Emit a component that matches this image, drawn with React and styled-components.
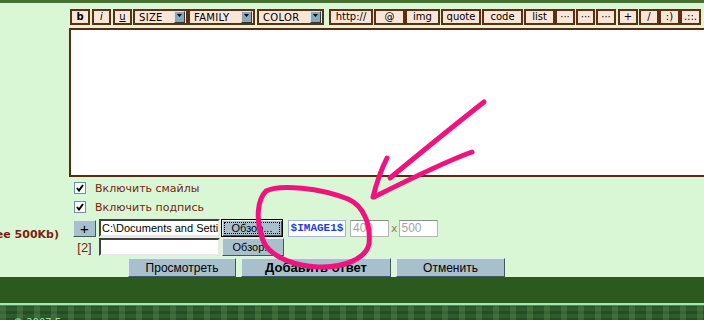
import React from "react";
import styled, { createGlobalStyle } from "styled-components";

const GlobalStyle = createGlobalStyle`
  html, body { margin: 0; padding: 0; }
  body {
    background: #d9f7d5;
    overflow: hidden;
    font-family: "DejaVu Sans", Verdana, sans-serif;
  }
`;

const Page = styled.div`
  position: relative;
  width: 704px;
  height: 320px;
  overflow: hidden;
  display: flex;
  flex-direction: column;
  background: #d9f7d5;
`;

const TopBand = styled.div`
  flex: none;
  height: 3px;
  background: #45702f;
`;

const FormGrid = styled.div`
  display: grid;
  grid-template-columns: 69px 1fr;
`;

const LeftCell = styled.div`
  display: flex;
  align-items: center;
  justify-content: flex-end;
  overflow: hidden;
  padding-right: 10px;
  white-space: nowrap;
  font: bold 11px "DejaVu Sans", Verdana, sans-serif;
  color: #7b1e12;
`;

const RightCell = styled.div`
  display: flex;
  flex-direction: column;
  min-width: 0;
`;

const Toolbar = styled.div`
  display: flex;
  height: 16px;
  margin: 6px 0 0 1px;
`;

const ToolBtn = styled.span`
  flex: none;
  box-sizing: border-box;
  width: ${(p) => p.$w}px;
  margin-left: ${(p) => p.$ml}px;
  height: 16px;
  border: 2px solid #5e2e12;
  background: #fae6d8;
  display: flex;
  align-items: center;
  justify-content: center;
  font-size: 10px;
  line-height: 1;
  color: #000;
  font-weight: ${(p) => (p.$b ? "bold" : "normal")};
  font-style: ${(p) => (p.$i ? "italic" : "normal")};
  text-decoration: ${(p) => (p.$u ? "underline" : "none")};
`;

const Select = styled.span`
  flex: none;
  box-sizing: border-box;
  width: ${(p) => p.$w}px;
  margin-left: ${(p) => p.$ml}px;
  height: 16px;
  border: 2px solid #5e2e12;
  background: #fae6d8;
  display: flex;
  align-items: stretch;
  padding: 0 1px 0 0;
`;

const SelectLabel = styled.span`
  flex: 1;
  display: flex;
  align-items: center;
  padding-left: 4px;
  font-size: 10px;
  letter-spacing: 0.3px;
  color: #000;
`;

const SelectArrow = styled.span`
  flex: none;
  width: 11px;
  box-sizing: border-box;
  background: #8ba7b7;
  border: 1px solid;
  border-color: #d8e6ee #2c3c46 #2c3c46 #d8e6ee;
  display: flex;
  justify-content: center;
  padding-top: 2px;
`;

const Editor = styled.div`
  box-sizing: border-box;
  width: 660px;
  height: 149px;
  margin-top: 3px;
  border: 2px solid #5a2a12;
  border-right: none;
  background: #fff;
`;

const Checks = styled.div`
  display: flex;
  flex-direction: column;
  gap: 7px;
  margin: 5px 0 0 5px;
`;

const CheckRow = styled.label`
  display: flex;
  align-items: center;
  gap: 9px;
  height: 12px;
`;

const CheckBox = styled.span`
  box-sizing: border-box;
  width: 12px;
  height: 12px;
  border: 1px solid #6e8eae;
  background: #fff;
  display: flex;
  align-items: center;
  justify-content: center;
`;

const CheckText = styled.span`
  font-size: 11px;
  color: #7b1e12;
`;

const FileRows = styled.div`
  display: flex;
  flex-direction: column;
  gap: 1px;
  margin-top: 6px;
`;

const FileRow = styled.div`
  display: flex;
  align-items: center;
  height: 18px;
`;

const Bevel = styled.span`
  box-sizing: border-box;
  flex: none;
  background: #a8c0cc;
  border: 1px solid;
  border-color: #e4eef2 #46565e #46565e #e4eef2;
  display: flex;
  align-items: center;
  justify-content: center;
  color: #000;
  font-family: "Liberation Sans", Arial, sans-serif;
`;

const PlusBtn = styled(Bevel)`
  width: 23px;
  height: 17px;
  margin-left: 4px;
  font-size: 15px;
`;

const IndexLabel = styled.span`
  flex: none;
  width: 23px;
  margin-left: 4px;
  text-align: center;
  font: 13px "Liberation Sans", Arial, sans-serif;
  color: #7b1e12;
`;

const FileInput = styled.span`
  flex: none;
  box-sizing: border-box;
  width: 121px;
  height: 18px;
  margin-left: 3px;
  border: 2px solid;
  border-color: #404040 #e8e8e8 #e8e8e8 #404040;
  background: #fff;
  overflow: hidden;
  white-space: nowrap;
  padding-left: 1px;
  font: 11px/14px "Liberation Sans", Arial, sans-serif;
  color: #000;
`;

const BrowseBtn = styled(Bevel)`
  width: 62px;
  height: 18px;
  margin-left: ${(p) => (p.$focused ? 1 : 2)}px;
  font-size: 11px;
  ${(p) =>
    p.$focused &&
    `
    border: 1px solid #000;
    box-shadow: inset 1px 1px 0 #e4eef2, inset -1px -1px 0 #46565e;
    outline: 1px dotted #000;
    outline-offset: -4px;
  `}
`;

const Tag = styled.span`
  flex: none;
  box-sizing: border-box;
  width: 58px;
  height: 17px;
  margin-left: 5px;
  border: 1px solid #a6b4d8;
  background: #fff;
  display: flex;
  align-items: center;
  justify-content: center;
  font: bold 11px "Liberation Mono", "Courier New", monospace;
  color: #1f3fd8;
`;

const SizeInput = styled.span`
  flex: none;
  box-sizing: border-box;
  width: 39px;
  height: 17px;
  margin-left: ${(p) => p.$ml}px;
  border: 1px solid #b4b4b4;
  border-top-color: #8c8c8c;
  background: #fff;
  padding-left: 2px;
  font: 12px/15px "Liberation Sans", Arial, sans-serif;
  color: #a4a4a4;
`;

const Times = styled.span`
  flex: none;
  margin-left: 2px;
  font: 11px "DejaVu Sans", Verdana, sans-serif;
  color: #a07868;
`;

const ButtonBar = styled.div`
  display: flex;
  gap: 5px;
  height: 19px;
  margin: 2px 0 0 128px;
`;

const ActionBtn = styled(Bevel)`
  width: ${(p) => p.$w}px;
  height: 19px;
  font-size: ${(p) => (p.$bold ? 13 : 12)}px;
  font-weight: ${(p) => (p.$bold ? "bold" : "normal")};
`;

const Footer = styled.div`
  flex: 1;
  display: flex;
  flex-direction: column;
`;

const FooterDark = styled.div`
  flex: none;
  height: 26px;
  background: #2c5a1e;
  border-bottom: 2px solid #a4e6b0;
`;

const FooterTexture = styled.div`
  flex: 1;
  border-top: 1px solid #4e8a5a;
  background-color: #2e5a2c;
  background-image:
    repeating-linear-gradient(90deg, rgba(120,170,110,0.25) 0 6px, transparent 6px 17px),
    repeating-linear-gradient(0deg, rgba(20,50,20,0.35) 0 3px, transparent 3px 7px);
  padding: 11px 0 0 13px;
  font: 10px "DejaVu Sans", Verdana, sans-serif;
  color: #8fe89c;
  overflow: hidden;
`;

const Scribble = styled.svg`
  position: absolute;
  left: 0;
  top: 0;
  width: 704px;
  height: 320px;
  pointer-events: none;
`;

const tools = [
  { t: "b", l: 70, r: 90, b: true },
  { t: "i", l: 92, r: 111, i: true },
  { t: "u", l: 113, r: 132, u: true },
  { t: "SIZE", l: 133, r: 188, sel: true },
  { t: "FAMILY", l: 188, r: 255, sel: true },
  { t: "COLOR", l: 257, r: 324, sel: true },
  { t: "http://", l: 329, r: 373 },
  { t: "@", l: 374, r: 405 },
  { t: "img", l: 405, r: 440 },
  { t: "quote", l: 441, r: 481 },
  { t: "code", l: 482, r: 523 },
  { t: "list", l: 524, r: 555 },
  { t: "···", l: 555, r: 575 },
  { t: "···", l: 576, r: 595 },
  { t: "···", l: 596, r: 616 },
  { t: "+", l: 618, r: 638 },
  { t: "/", l: 639, r: 659 },
  { t: ":)", l: 659, r: 680 },
  { t: ".::.", l: 680, r: 701 },
];

const Check = () => (
  <svg width="8" height="8" viewBox="0 0 8 8">
    <path d="M1 4 L3 6.5 L7 1" fill="none" stroke="#000" strokeWidth="2" />
  </svg>
);

const Tri = () => (
  <svg width="5" height="3" viewBox="0 0 5 3">
    <path d="M0 0 H5 L2.5 3 Z" fill="#000" />
  </svg>
);

export default function App() {
  let prev = 70;
  return (
    <Page>
      <GlobalStyle />
      <TopBand />
      <FormGrid>
        <LeftCell />
        <RightCell>
          <Toolbar>
            {tools.map((tb, k) => {
              const ml = tb.l - prev;
              prev = tb.r;
              const w = tb.r - tb.l;
              if (tb.sel) {
                return (
                  <Select key={k} $w={w} $ml={ml}>
                    <SelectLabel>{tb.t}</SelectLabel>
                    <SelectArrow>
                      <Tri />
                    </SelectArrow>
                  </Select>
                );
              }
              return (
                <ToolBtn key={k} $w={w} $ml={ml} $b={tb.b} $i={tb.i} $u={tb.u}>
                  {tb.t}
                </ToolBtn>
              );
            })}
          </Toolbar>
          <Editor />
          <Checks>
            <CheckRow>
              <CheckBox>
                <Check />
              </CheckBox>
              <CheckText>Включить смайлы</CheckText>
            </CheckRow>
            <CheckRow>
              <CheckBox>
                <Check />
              </CheckBox>
              <CheckText>Включить подпись</CheckText>
            </CheckRow>
          </Checks>
        </RightCell>
        <LeftCell>Картинки (free 500Kb)</LeftCell>
        <RightCell>
          <FileRows>
            <FileRow>
              <PlusBtn>+</PlusBtn>
              <FileInput>C:\Documents and Settings\User\image.jpg</FileInput>
              <BrowseBtn $focused>Обзор...</BrowseBtn>
              <Tag>$IMAGE1$</Tag>
              <SizeInput $ml={4}>400</SizeInput>
              <Times>x</Times>
              <SizeInput $ml={1}>500</SizeInput>
            </FileRow>
            <FileRow>
              <IndexLabel>[2]</IndexLabel>
              <FileInput />
              <BrowseBtn>Обзор...</BrowseBtn>
            </FileRow>
          </FileRows>
        </RightCell>
      </FormGrid>
      <ButtonBar>
        <ActionBtn $w={108}>Просмотреть</ActionBtn>
        <ActionBtn $w={150} $bold>
          Добавить ответ
        </ActionBtn>
        <ActionBtn $w={109}>Отменить</ActionBtn>
      </ButtonBar>
      <Footer>
        <FooterDark />
        <FooterTexture>© 2007 Forum</FooterTexture>
      </Footer>
      <Scribble viewBox="0 0 704 320">
        <g fill="none" stroke="#f2127e" strokeWidth="5" strokeLinecap="round" strokeLinejoin="round">
          <path d="M 262 236 C 256 220, 257 200, 266 191 C 280 184, 320 188, 348 199 C 364 206, 371 225, 369 244 C 366 258, 345 268, 318 267 C 295 266, 275 258, 266 246 C 262 240, 260 232, 259 226" />
          <path d="M 484 102 C 470 113, 430 145, 390 178" />
          <path d="M 472 152 C 455 158, 420 174, 374 197" />
          <path d="M 387 158 C 381 170, 376 185, 373 197" />
        </g>
      </Scribble>
    </Page>
  );
}
